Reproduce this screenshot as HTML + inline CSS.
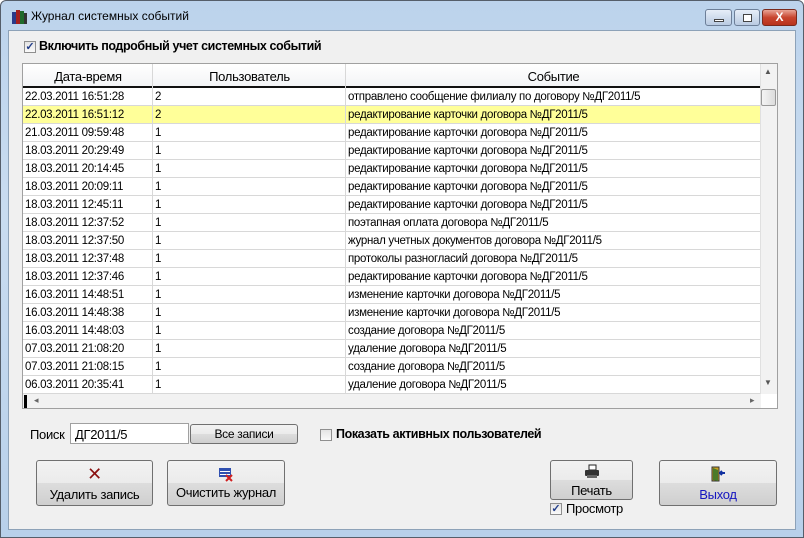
<!DOCTYPE html>
<html><head><meta charset="utf-8"><style>
*{margin:0;padding:0;box-sizing:border-box}
body{width:804px;height:538px;overflow:hidden;font-family:"Liberation Sans",sans-serif;font-size:12px;color:#000;background:#fff}
.win{position:absolute;left:0;top:0;width:804px;height:538px;background:linear-gradient(#bcd3ec,#c9dcf0 40%,#b8d0ea);border:1px solid #555e6a;border-radius:6px 6px 0 0}
.title{position:absolute;left:30px;top:8px;font-size:12px;color:#000}
.client{position:absolute;left:8px;top:30px;width:788px;height:500px;background:#f0f0f0;border:1px solid #8da2b8}
.abs{position:absolute}
.n{letter-spacing:-0.3px}
.cb{position:absolute;width:12px;height:12px;border:1px solid #8f8f8f;background:linear-gradient(#e4e4e4,#fafafa);font-size:11px;line-height:10px;text-align:center;color:#233e8a;font-weight:bold}
.grid{position:absolute;left:22px;top:63px;width:756px;height:346px;background:#fff;border:1px solid #a0a0a0;overflow:hidden}
.hdr{position:absolute;left:0;top:0;height:24px;width:738px;background:linear-gradient(#fff,#f3f4f6);border-bottom:2px solid #111}
.hdr div{position:absolute;top:5px;font-size:13px;text-align:center;letter-spacing:-0.3px}
.row{position:absolute;left:0;width:738px;height:18px;border-bottom:1px solid #d8d8d8}
.row span{position:absolute;top:3px;font-size:11.5px;white-space:nowrap;letter-spacing:-0.3px}
.vl{position:absolute;top:0;width:1px;height:330px;background:#d8d8d8}
.btn{position:absolute;border:1px solid #707070;border-radius:3px;background:linear-gradient(#f2f2f2 0,#ebebeb 50%,#dddddd 50%,#cfcfcf);text-align:center;font-size:13px;letter-spacing:-0.3px}
</style></head><body>
<div class="win">
<svg class="abs" style="left:9px;top:7px" width="18" height="18"><rect x="2" y="4" width="4" height="12" fill="#2b3a8a"/><rect x="6" y="2" width="4" height="14" fill="#a31f1f"/><rect x="10" y="3" width="4" height="13" fill="#1f6a2b"/><rect x="14" y="5" width="3" height="11" fill="#333"/></svg>
<div class="title">Журнал системных событий</div>
<div class="abs" style="left:704px;top:8px;width:27px;height:17px;border:1px solid #6d7f98;border-radius:3px;background:linear-gradient(#e6eef8,#b9cbe2)"><div class="abs" style="left:8px;top:9px;width:10px;height:3px;border:1px solid #444;background:#fff"></div></div>
<div class="abs" style="left:733px;top:8px;width:26px;height:17px;border:1px solid #6d7f98;border-radius:3px;background:linear-gradient(#e6eef8,#b9cbe2)"><div class="abs" style="left:8px;top:4px;width:9px;height:8px;border:1px solid #444;background:#fff"></div></div>
<div class="abs" style="left:761px;top:8px;width:35px;height:17px;border:1px solid #7a2a1d;border-radius:3px;background:linear-gradient(#e9a496,#c8452f 50%,#b8331d);color:#fff;font-weight:bold;text-align:center;font-size:12px;line-height:15px">X</div>
</div>
<div class="client"></div>
<div class="cb" style="left:24px;top:41px">✓</div>
<div class="abs" style="left:39px;top:39px;font-weight:bold;font-size:12.5px;letter-spacing:-0.4px">Включить подробный учет системных событий</div>

<div class="grid">
<div class="hdr">
<div style="left:0;width:130px">Дата-время</div>
<div style="left:130px;width:193px">Пользователь</div>
<div style="left:323px;width:415px">Событие</div>
<div class="abs" style="left:129px;top:0;width:1px;height:22px;background:#d5d5d5"></div>
<div class="abs" style="left:322px;top:0;width:1px;height:22px;background:#d5d5d5"></div>
</div>
<div id="rows"></div>
<div class="abs" style="left:737px;top:0;width:18px;height:330px;background:#f2f2f2;border-left:1px solid #e0e0e0"></div>
<div class="abs" style="left:741px;top:3px;font-size:8px;color:#555">▲</div>
<div class="abs" style="left:741px;top:314px;font-size:8px;color:#555">▼</div>
<div class="abs" style="left:738px;top:25px;width:15px;height:17px;border:1px solid #999;border-radius:2px;background:linear-gradient(90deg,#f4f4f4,#dcdcdc)"></div>
<div class="abs" style="left:0;top:330px;width:738px;height:15px;background:#f2f2f2"></div>
<div class="abs" style="left:1px;top:331px;width:3px;height:13px;background:#000"></div>
<div class="abs" style="left:11px;top:331px;font-size:9px;color:#666">◂</div>
<div class="abs" style="left:727px;top:331px;font-size:9px;color:#666">▸</div>
</div>

<div class="abs n" style="left:30px;top:427px;font-size:13px">Поиск</div>
<div class="abs n" style="left:70px;top:423px;width:119px;height:21px;background:#fff;border:1px solid #a0a0a0;padding:3px 4px;font-size:13px">ДГ2011/5</div>
<div class="btn" style="left:190px;top:424px;width:108px;height:20px;font-size:12px;line-height:18px">Все записи</div>
<div class="cb" style="left:320px;top:429px"></div>
<div class="abs" style="left:336px;top:427px;font-weight:bold;font-size:12.5px;letter-spacing:-0.4px">Показать активных пользователей</div>

<div class="btn" style="left:36px;top:460px;width:117px;height:46px"><div style="color:#8a1010;font-size:18px;margin-top:4px;line-height:18px">✕</div><div style="margin-top:4px">Удалить запись</div></div>
<div class="btn" style="left:167px;top:460px;width:118px;height:46px"><svg width="16" height="16" style="margin-top:5px"><rect x="1" y="2" width="12" height="9" fill="#3050b0"/><rect x="2" y="5" width="10" height="1" fill="#fff"/><rect x="2" y="8" width="10" height="1" fill="#fff"/><path d="M8 9l6 6M14 9l-6 6" stroke="#d02020" stroke-width="2"/></svg><div style="margin-top:0px">Очистить журнал</div></div>
<div class="btn" style="left:550px;top:460px;width:83px;height:40px"><svg width="16" height="15" style="margin-top:3px"><rect x="5" y="1" width="7" height="5" fill="#fff" stroke="#222"/><rect x="1" y="6" width="14" height="6" rx="1" fill="#333"/><rect x="3" y="11" width="10" height="3" fill="#666"/></svg><div style="margin-top:1px">Печать</div></div>
<div class="cb" style="left:550px;top:503px">✓</div>
<div class="abs n" style="left:566px;top:501px;font-size:13px">Просмотр</div>
<div class="btn" style="left:659px;top:460px;width:118px;height:46px"><svg width="16" height="16" style="margin-top:5px"><rect x="2" y="1" width="7" height="14" fill="#c8a020" stroke="#333"/><path d="M3 2l5 2v11l-5-1z" fill="#4a7a2a"/><path d="M10 7h5M12 5l-2 2 2 2" stroke="#1030a0" stroke-width="2" fill="none"/></svg><div style="margin-top:2px;color:#1515c0">Выход</div></div>

<script>
var d=[["22.03.2011 16:51:28","2","отправлено сообщение филиалу по договору №ДГ2011/5"],["22.03.2011 16:51:12","2","редактирование карточки договора №ДГ2011/5"],["21.03.2011 09:59:48","1","редактирование карточки договора №ДГ2011/5"],["18.03.2011 20:29:49","1","редактирование карточки договора №ДГ2011/5"],["18.03.2011 20:14:45","1","редактирование карточки договора №ДГ2011/5"],["18.03.2011 20:09:11","1","редактирование карточки договора №ДГ2011/5"],["18.03.2011 12:45:11","1","редактирование карточки договора №ДГ2011/5"],["18.03.2011 12:37:52","1","поэтапная оплата договора №ДГ2011/5"],["18.03.2011 12:37:50","1","журнал учетных документов договора №ДГ2011/5"],["18.03.2011 12:37:48","1","протоколы разногласий договора №ДГ2011/5"],["18.03.2011 12:37:46","1","редактирование карточки договора №ДГ2011/5"],["16.03.2011 14:48:51","1","изменение карточки договора №ДГ2011/5"],["16.03.2011 14:48:38","1","изменение карточки договора №ДГ2011/5"],["16.03.2011 14:48:03","1","создание договора №ДГ2011/5"],["07.03.2011 21:08:20","1","удаление договора №ДГ2011/5"],["07.03.2011 21:08:15","1","создание договора №ДГ2011/5"],["06.03.2011 20:35:41","1","удаление договора №ДГ2011/5"]];
var h='';d.forEach(function(r,i){h+='<div class="row" style="top:'+(24+i*18)+'px;'+(i==1?'background:#ffff99':'')+'"><span style="left:2px">'+r[0]+'</span><span style="left:132px">'+r[1]+'</span><span style="left:325px">'+r[2]+'</span></div>';});
h+='<div class="vl" style="left:129px"></div><div class="vl" style="left:322px"></div>';
document.getElementById('rows').innerHTML=h;
</script>
</body></html>
